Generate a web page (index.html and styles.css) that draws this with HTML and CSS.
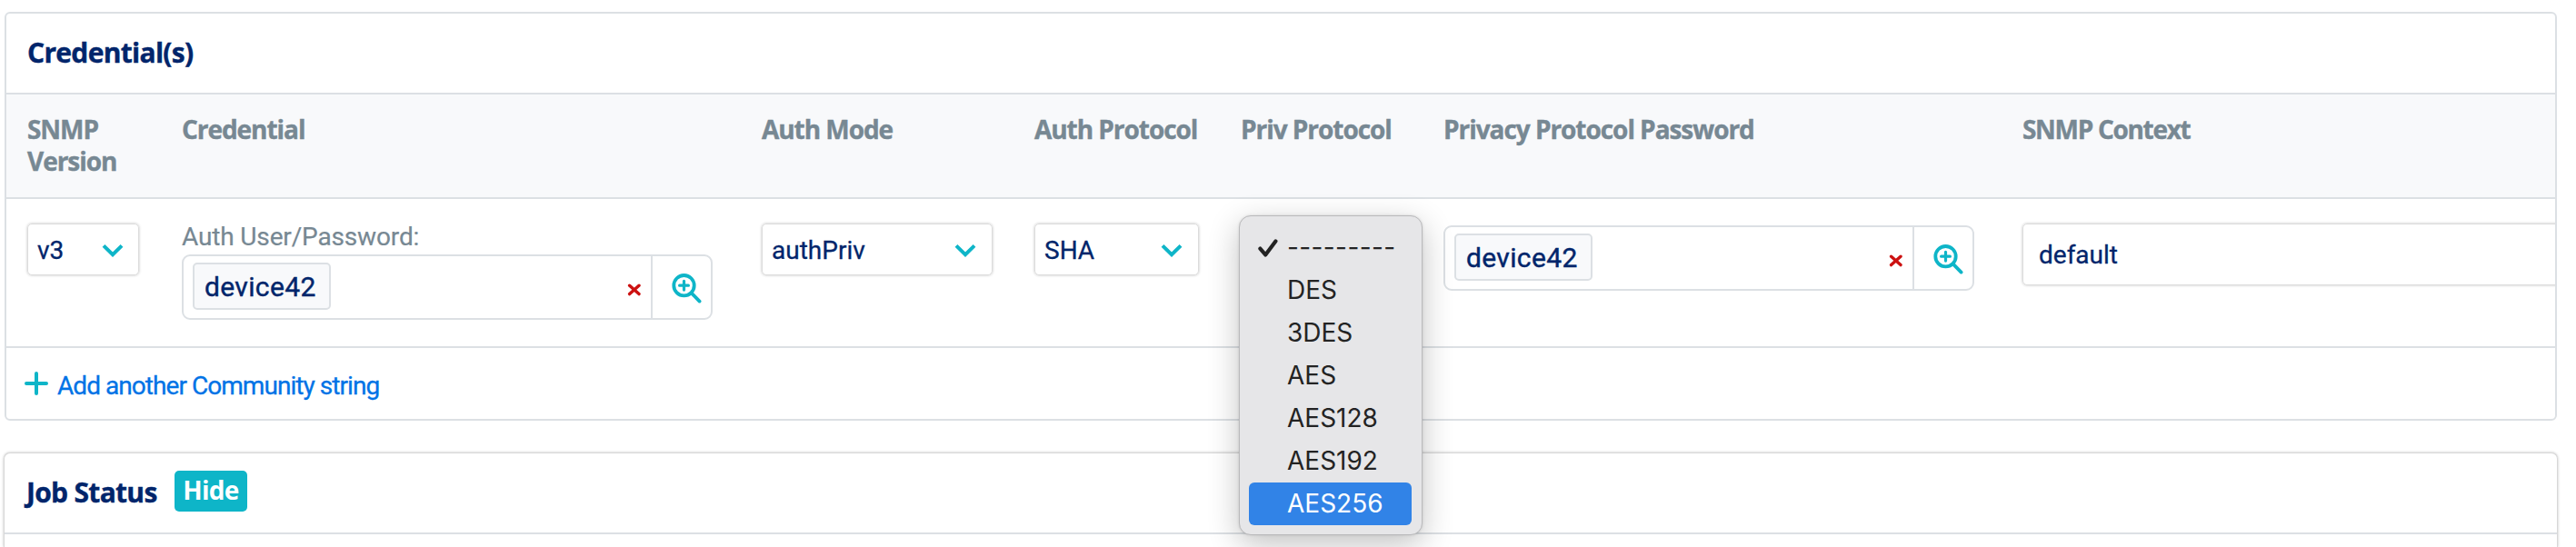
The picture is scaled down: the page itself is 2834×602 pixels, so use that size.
FILE: index.html
```html
<!DOCTYPE html>
<html lang="en">
<head>
<meta charset="utf-8">
<title>Credential(s)</title>
<link rel="stylesheet" href="styles.css">
</head>
<body>
<svg class="defs" width="0" height="0">
  <symbol id="chevron" viewBox="0 0 24 15"><path d="M2 2.3 12 12.2 22 2.3" fill="none" stroke="currentColor" stroke-width="4"/></symbol>
  <symbol id="search" viewBox="0 0 33 33"><g fill="none" stroke="currentColor" stroke-linecap="round"><circle cx="13.5" cy="13.2" r="11.2" stroke-width="3.8"/><path d="M21.8 21.6 30.6 30.6" stroke-width="3.8"/><path d="M13.5 8.3v9.8M8.6 13.2h9.8" stroke-width="3.2"/></g></symbol>
  <symbol id="cross" viewBox="0 0 16 14"><path d="M2.6 2.2 13 11.6M13 2.2 2.6 11.6" fill="none" stroke="currentColor" stroke-width="3.4" stroke-linecap="round"/></symbol>
</svg>
<section class="card credentials">
  <h2 class="card-title">Credential(s)</h2>
  <div class="row head">
    <div class="th">SNMP<br>Version</div>
    <div class="th">Credential</div>
    <div class="th">Auth Mode</div>
    <div class="th">Auth Protocol</div>
    <div class="th">Priv Protocol</div>
    <div class="th">Privacy Protocol Password</div>
    <div class="th snmp-context">SNMP Context</div>
  </div>
  <div class="row fields">
    <div class="cell"><div class="select version"><span>v3</span><svg class="chevron"><use href="#chevron"/></svg></div></div>
    <div class="cell">
      <div class="label">Auth User/Password:</div>
      <div class="lookup">
        <span class="chip">device42</span>
        <svg class="cross"><use href="#cross"/></svg>
        <span class="lookup-button"><svg class="search"><use href="#search"/></svg></span>
      </div>
    </div>
    <div class="cell"><div class="select mode"><span>authPriv</span><svg class="chevron"><use href="#chevron"/></svg></div></div>
    <div class="cell"><div class="select protocol"><span>SHA</span><svg class="chevron"><use href="#chevron"/></svg></div></div>
    <div class="cell menu-anchor">
      <ul class="menu">
        <li class="option checked"><svg class="check" viewBox="0 0 22 20"><path d="M2.4 10.6 8.2 17.4 19.4 2.4" fill="none" stroke="currentColor" stroke-width="4.2" stroke-linecap="round" stroke-linejoin="round"/></svg><span class="dashes">---------</span></li>
        <li class="option">DES</li>
        <li class="option">3DES</li>
        <li class="option">AES</li>
        <li class="option">AES128</li>
        <li class="option">AES192</li>
        <li class="option active">AES256</li>
      </ul>
    </div>
    <div class="cell">
      <div class="lookup privacy">
        <span class="chip">device42</span>
        <svg class="cross"><use href="#cross"/></svg>
        <span class="lookup-button"><svg class="search"><use href="#search"/></svg></span>
      </div>
    </div>
    <div class="cell context"><div class="input">default</div></div>
  </div>
  <div class="add">
    <svg class="plus" viewBox="0 0 26 26"><path d="M13 2v22M2 13h22" fill="none" stroke="currentColor" stroke-width="4" stroke-linecap="round"/></svg>
    <a class="add-link">Add another Community string</a>
  </div>
</section>
<section class="card job">
  <div class="job-head"><h2 class="job-title">Job Status</h2><span class="hide">Hide</span></div>
</section>
</body>
</html>
```
FILE: styles.css
```css
* { box-sizing: border-box; }
body {
  margin: 0;
  height: 602px;
  padding: 13px 20px 0 5px;
  overflow: hidden;
  background: #fff;
  color: #00256b;
  font: 28px/34px Roboto, "Liberation Sans", sans-serif;
}
.defs { position: absolute; }
svg { display: block; flex: none; }
h2 {
  margin: 0;
  font: 700 30px/40px "Open Sans", "Noto Sans", sans-serif;
  letter-spacing: -0.7px;
  -webkit-text-stroke: .4px;
}

.card { border: 2px solid #dce0e4; border-radius: 6px; background: #fff; }
.credentials { width: 2808px; height: 450px; }
.card-title { height: 89px; padding: 23px 0 0 23px; border-bottom: 2px solid #dce0e4; }

.row {
  display: grid;
  grid-template-columns: 170px 638px 300px 227px 223px 637px 1fr;
  padding-left: 23px;
  border-bottom: 2px solid #dce0e4;
}
.head { height: 115px; padding-top: 21px; background: #f8f9fb; }
.th {
  color: #778893;
  font: 700 28px/35px "Open Sans", "Noto Sans", sans-serif;
  letter-spacing: -1.05px;
  white-space: nowrap;
  -webkit-text-stroke: .4px;
}
.snmp-context { letter-spacing: -1.3px; }
.fields { height: 164px; }
.cell { min-width: 0; padding-top: 27px; }

.select {
  display: flex;
  align-items: center;
  justify-content: space-between;
  height: 57px;
  padding: 2px 16px 0 10px;
  border: 1px solid #dcdcdc;
  border-radius: 5px;
  box-shadow: 0 0 3px rgba(0, 0, 0, .25);
  -webkit-text-stroke: .3px;
}
.version { width: 123px; }
.mode { width: 254px; padding-right: 17px; }
.protocol { width: 181px; padding-right: 17px; }
.chevron { width: 24px; height: 15px; color: #0eb5c8; }

.label { height: 34px; color: #778893; line-height: 30px; letter-spacing: -.15px; -webkit-text-stroke: .2px; }
.lookup {
  display: flex;
  align-items: stretch;
  width: 584px;
  height: 72px;
  border: 2px solid #dce0e4;
  border-radius: 9px;
}
.privacy { margin-top: 2px; }
.chip {
  height: 52px;
  width: 152px;
  margin: 7px auto 0 10px;
  padding-left: 11px;
  border: 2px solid #dce0e4;
  border-radius: 5px;
  background: #f8f9fb;
  font-size: 30px;
  line-height: 50px;
  letter-spacing: .35px;
  -webkit-text-stroke: .4px;
}
.cross { width: 16px; height: 14px; margin: 30px 10px 0 0; color: #cc1111; }
.lookup-button { width: 66px; padding: 19px 0 0 21px; border-left: 2px solid #dce0e4; }
.search { width: 33px; height: 33px; color: #0eb5c8; }

.context { overflow: hidden; padding-left: 3px; margin-left: -3px; }
.input {
  width: 640px;
  height: 68px;
  padding-left: 17px;
  border: 1px solid #dcdcdc;
  border-radius: 5px;
  box-shadow: 0 0 3px rgba(0, 0, 0, .25);
  line-height: 68px;
  -webkit-text-stroke: .3px;
}

.menu-anchor { position: relative; }
.menu {
  position: absolute;
  z-index: 2;
  top: 18px;
  left: -2px;
  width: 202px;
  height: 352px;
  margin: 0;
  padding: 11px 11px 11px 10px;
  list-style: none;
  border: 1px solid #b9b9bb;
  border-radius: 13px;
  background: #e6e6e8;
  box-shadow: 0 10px 34px rgba(0, 0, 0, .24), 0 0 3px rgba(0, 0, 0, .12);
}
.option {
  display: flex;
  align-items: center;
  height: 47px;
  padding-left: 42px;
  color: #232323;
  font: 400 28px/47px Inter, "Liberation Sans", sans-serif;
}
.checked { padding-left: 10px; gap: 10px; }
.check { width: 22px; height: 20px; }
.dashes { letter-spacing: .4px; }
.active { border-radius: 6px; background: #3183e7; color: #fff; }

.add { display: flex; align-items: flex-start; padding: 24px 0 0 20px; color: #0eb5c8; }
.plus { width: 26px; height: 26px; margin-top: 2px; }
.add-link { margin: 1px 0 0 10px; color: #0073e6; letter-spacing: -.95px; line-height: 34px; -webkit-text-stroke: .3px; }

.job {
  width: 2810px;
  height: 104px;
  margin: 35px 0 0 -1px;
  border: 1px solid #d8d8d8;
  border-bottom: 0;
  border-radius: 7px 7px 0 0;
  box-shadow: 0 0 3px rgba(0, 0, 0, .25);
}
.job-head { display: flex; height: 89px; padding: 19px 0 0 24px; border-bottom: 2px solid #dce0e4; }
.job-title { padding-top: 4px; width: 163px; white-space: nowrap; }
.hide {
  width: 80px;
  height: 45px;
  border-radius: 5px;
  background: #0eb5c8;
  color: #fff;
  font: 700 28px/42px "Open Sans", "Noto Sans", sans-serif;
  letter-spacing: -.7px;
  text-align: center;
}
```
